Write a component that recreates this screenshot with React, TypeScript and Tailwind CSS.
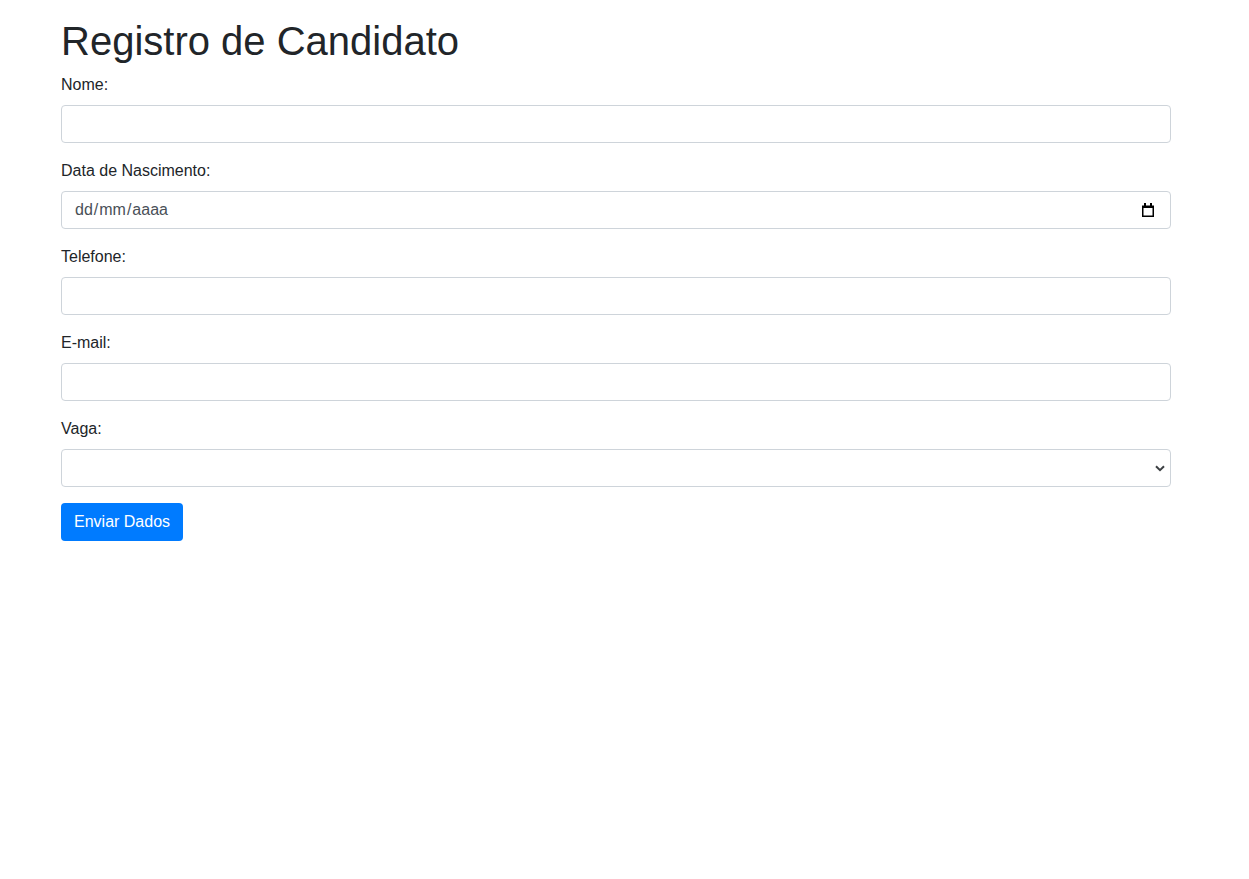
import React from 'react';

const inputCls =
  'block w-full h-[38px] px-3 rounded-[4px] border border-[#ced4da] bg-white text-base text-[#495057] outline-none';

const Field: React.FC<{ label: string; children: React.ReactNode }> = ({ label, children }) => (
  <div className="mb-4">
    <label className="block mb-2 leading-6">{label}</label>
    {children}
  </div>
);

const CalendarIcon = () => (
  <svg width="14" height="15" viewBox="0 0 14 15" aria-hidden="true">
    <rect x="3" y="0" width="2" height="3" fill="#000" />
    <rect x="9" y="0" width="2" height="3" fill="#000" />
    <path d="M1 2.5h12v11.5H1z M2.5 5v7.5h9V5z" fill="#000" fillRule="evenodd" />
  </svg>
);

const Chevron = () => (
  <svg width="10" height="7" viewBox="0 0 10 7" aria-hidden="true">
    <path d="M1 1.2l4 4 4-4" fill="none" stroke="#3c4043" strokeWidth="2" />
  </svg>
);

export default function App() {
  return (
    <div className="min-h-screen bg-white text-[#212529] font-['Liberation_Sans',Arial,sans-serif]">
      <div className="ml-[61px] w-[1110px] pt-[17px]">
        <h1 className="text-[40px] leading-[48px] font-medium mb-2">Registro de Candidato</h1>
        <form onSubmit={e => e.preventDefault()}>
          <Field label="Nome:">
            <input type="text" className={inputCls} />
          </Field>
          <Field label="Data de Nascimento:">
            <div className={`${inputCls} flex items-center justify-between pl-[12px] pr-[15px]`}>
              <span className="flex">
                <span className="px-[1px]">dd</span>/<span className="px-[1px]">mm</span>/
                <span className="px-[1px]">aaaa</span>
              </span>
              <CalendarIcon />
            </div>
          </Field>
          <Field label="Telefone:">
            <input type="text" className={inputCls} />
          </Field>
          <Field label="E-mail:">
            <input type="email" className={inputCls} />
          </Field>
          <Field label="Vaga:">
            <div className="relative">
              <select className={`${inputCls} appearance-none`}>
                <option value=""></option>
              </select>
              <span className="absolute right-[6px] top-[16px] pointer-events-none">
                <Chevron />
              </span>
            </div>
          </Field>
          <button
            type="submit"
            className="h-[38px] px-[13px] rounded-[4px] bg-[#007bff] text-white text-base leading-6"
          >
            Enviar Dados
          </button>
        </form>
      </div>
    </div>
  );
}
